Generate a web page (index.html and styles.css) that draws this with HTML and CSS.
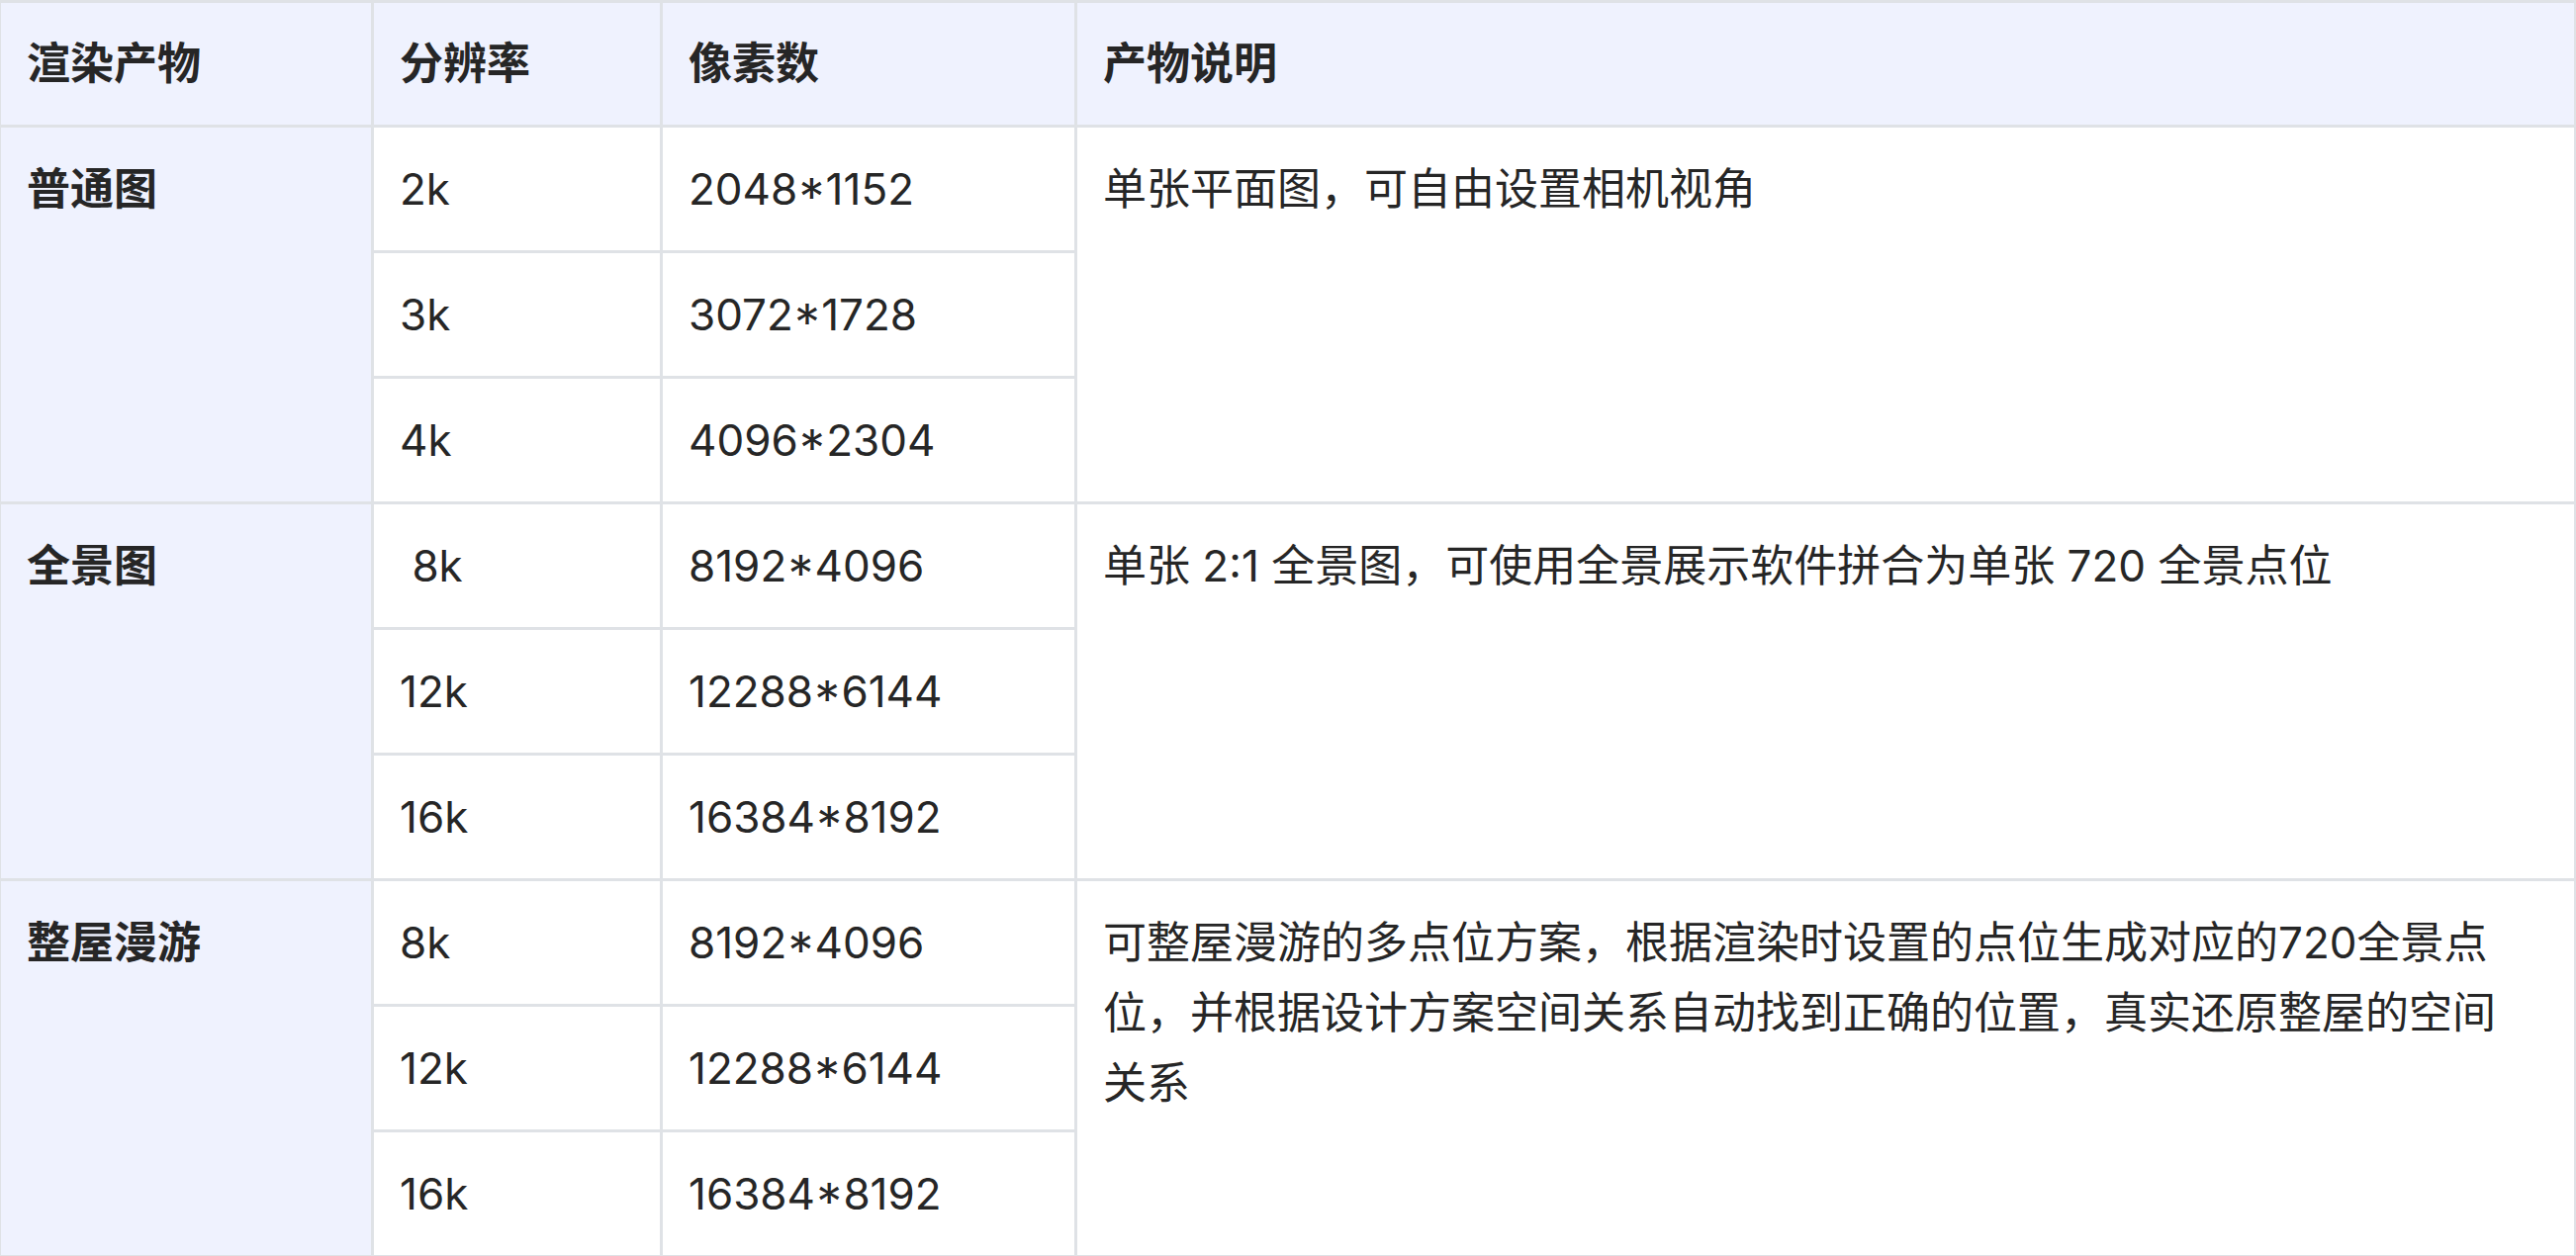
FILE: index.html
```html
<!DOCTYPE html>
<html lang="zh-CN">
<head>
<meta charset="utf-8">
<title>渲染产物</title>
<link rel="stylesheet" href="styles.css">
</head>
<body>
<table class="spec">
  <colgroup>
    <col class="c-type">
    <col class="c-res">
    <col class="c-px">
    <col class="c-desc">
  </colgroup>
  <thead>
    <tr>
      <th>渲染产物</th>
      <th>分辨率</th>
      <th>像素数</th>
      <th class="desc">产物说明</th>
    </tr>
  </thead>
  <tbody>
    <tr>
      <td class="type" rowspan="3">普通图</td>
      <td>2k</td>
      <td>2048*1152</td>
      <td class="desc" rowspan="3">单张平面图，可自由设置相机视角</td>
    </tr>
    <tr>
      <td>3k</td>
      <td>3072*1728</td>
    </tr>
    <tr>
      <td>4k</td>
      <td>4096*2304</td>
    </tr>
    <tr>
      <td class="type" rowspan="3">全景图</td>
      <td>&nbsp;8k</td>
      <td>8192*4096</td>
      <td class="desc" rowspan="3">单张 2:1 全景图，可使用全景展示软件拼合为单张 720 全景点位</td>
    </tr>
    <tr>
      <td>12k</td>
      <td>12288*6144</td>
    </tr>
    <tr>
      <td>16k</td>
      <td>16384*8192</td>
    </tr>
    <tr>
      <td class="type" rowspan="3">整屋漫游</td>
      <td>8k</td>
      <td>8192*4096</td>
      <td class="desc" rowspan="3">可整屋漫游的多点位方案，根据渲染时设置的点位生成对应的720全景点位，并根据设计方案空间关系自动找到正确的位置，真实还原整屋的空间关系</td>
    </tr>
    <tr>
      <td>12k</td>
      <td>12288*6144</td>
    </tr>
    <tr>
      <td>16k</td>
      <td>16384*8192</td>
    </tr>
  </tbody>
</table>
</body>
</html>
```

FILE: styles.css
```css
html, body {
  margin: 0;
  padding: 0;
  background: #ffffff;
}

body {
  overflow: hidden;
}

.spec {
  border-collapse: separate;
  border-spacing: 0;
  table-layout: fixed;
  width: 2604px;
  margin-left: -2px;
  border-top: 3px solid #dfe2e6;
  border-left: 3px solid #dfe2e6;
  font-family: "Inter", "Noto Sans CJK SC", sans-serif;
  font-size: 44px;
  line-height: 71px;
  color: #262626;
}

.c-type { width: 377px; }
.c-res { width: 292px; }
.c-px { width: 419px; }
.c-desc { width: 1516px; }

.spec th,
.spec td {
  border-right: 3px solid #dfe2e6;
  border-bottom: 3px solid #dfe2e6;
  padding: 27px 26px 26px 26px;
  text-align: left;
  vertical-align: top;
  white-space: nowrap;
}

.spec th {
  background: #eff2fe;
  font-weight: 600;
  padding-top: 26px;
  padding-bottom: 26px;
}

.spec td.type {
  background: #eff2fe;
  font-weight: 600;
}

.spec td.desc,
.spec th.desc {
  white-space: normal;
  padding-right: 36px;
}
```
